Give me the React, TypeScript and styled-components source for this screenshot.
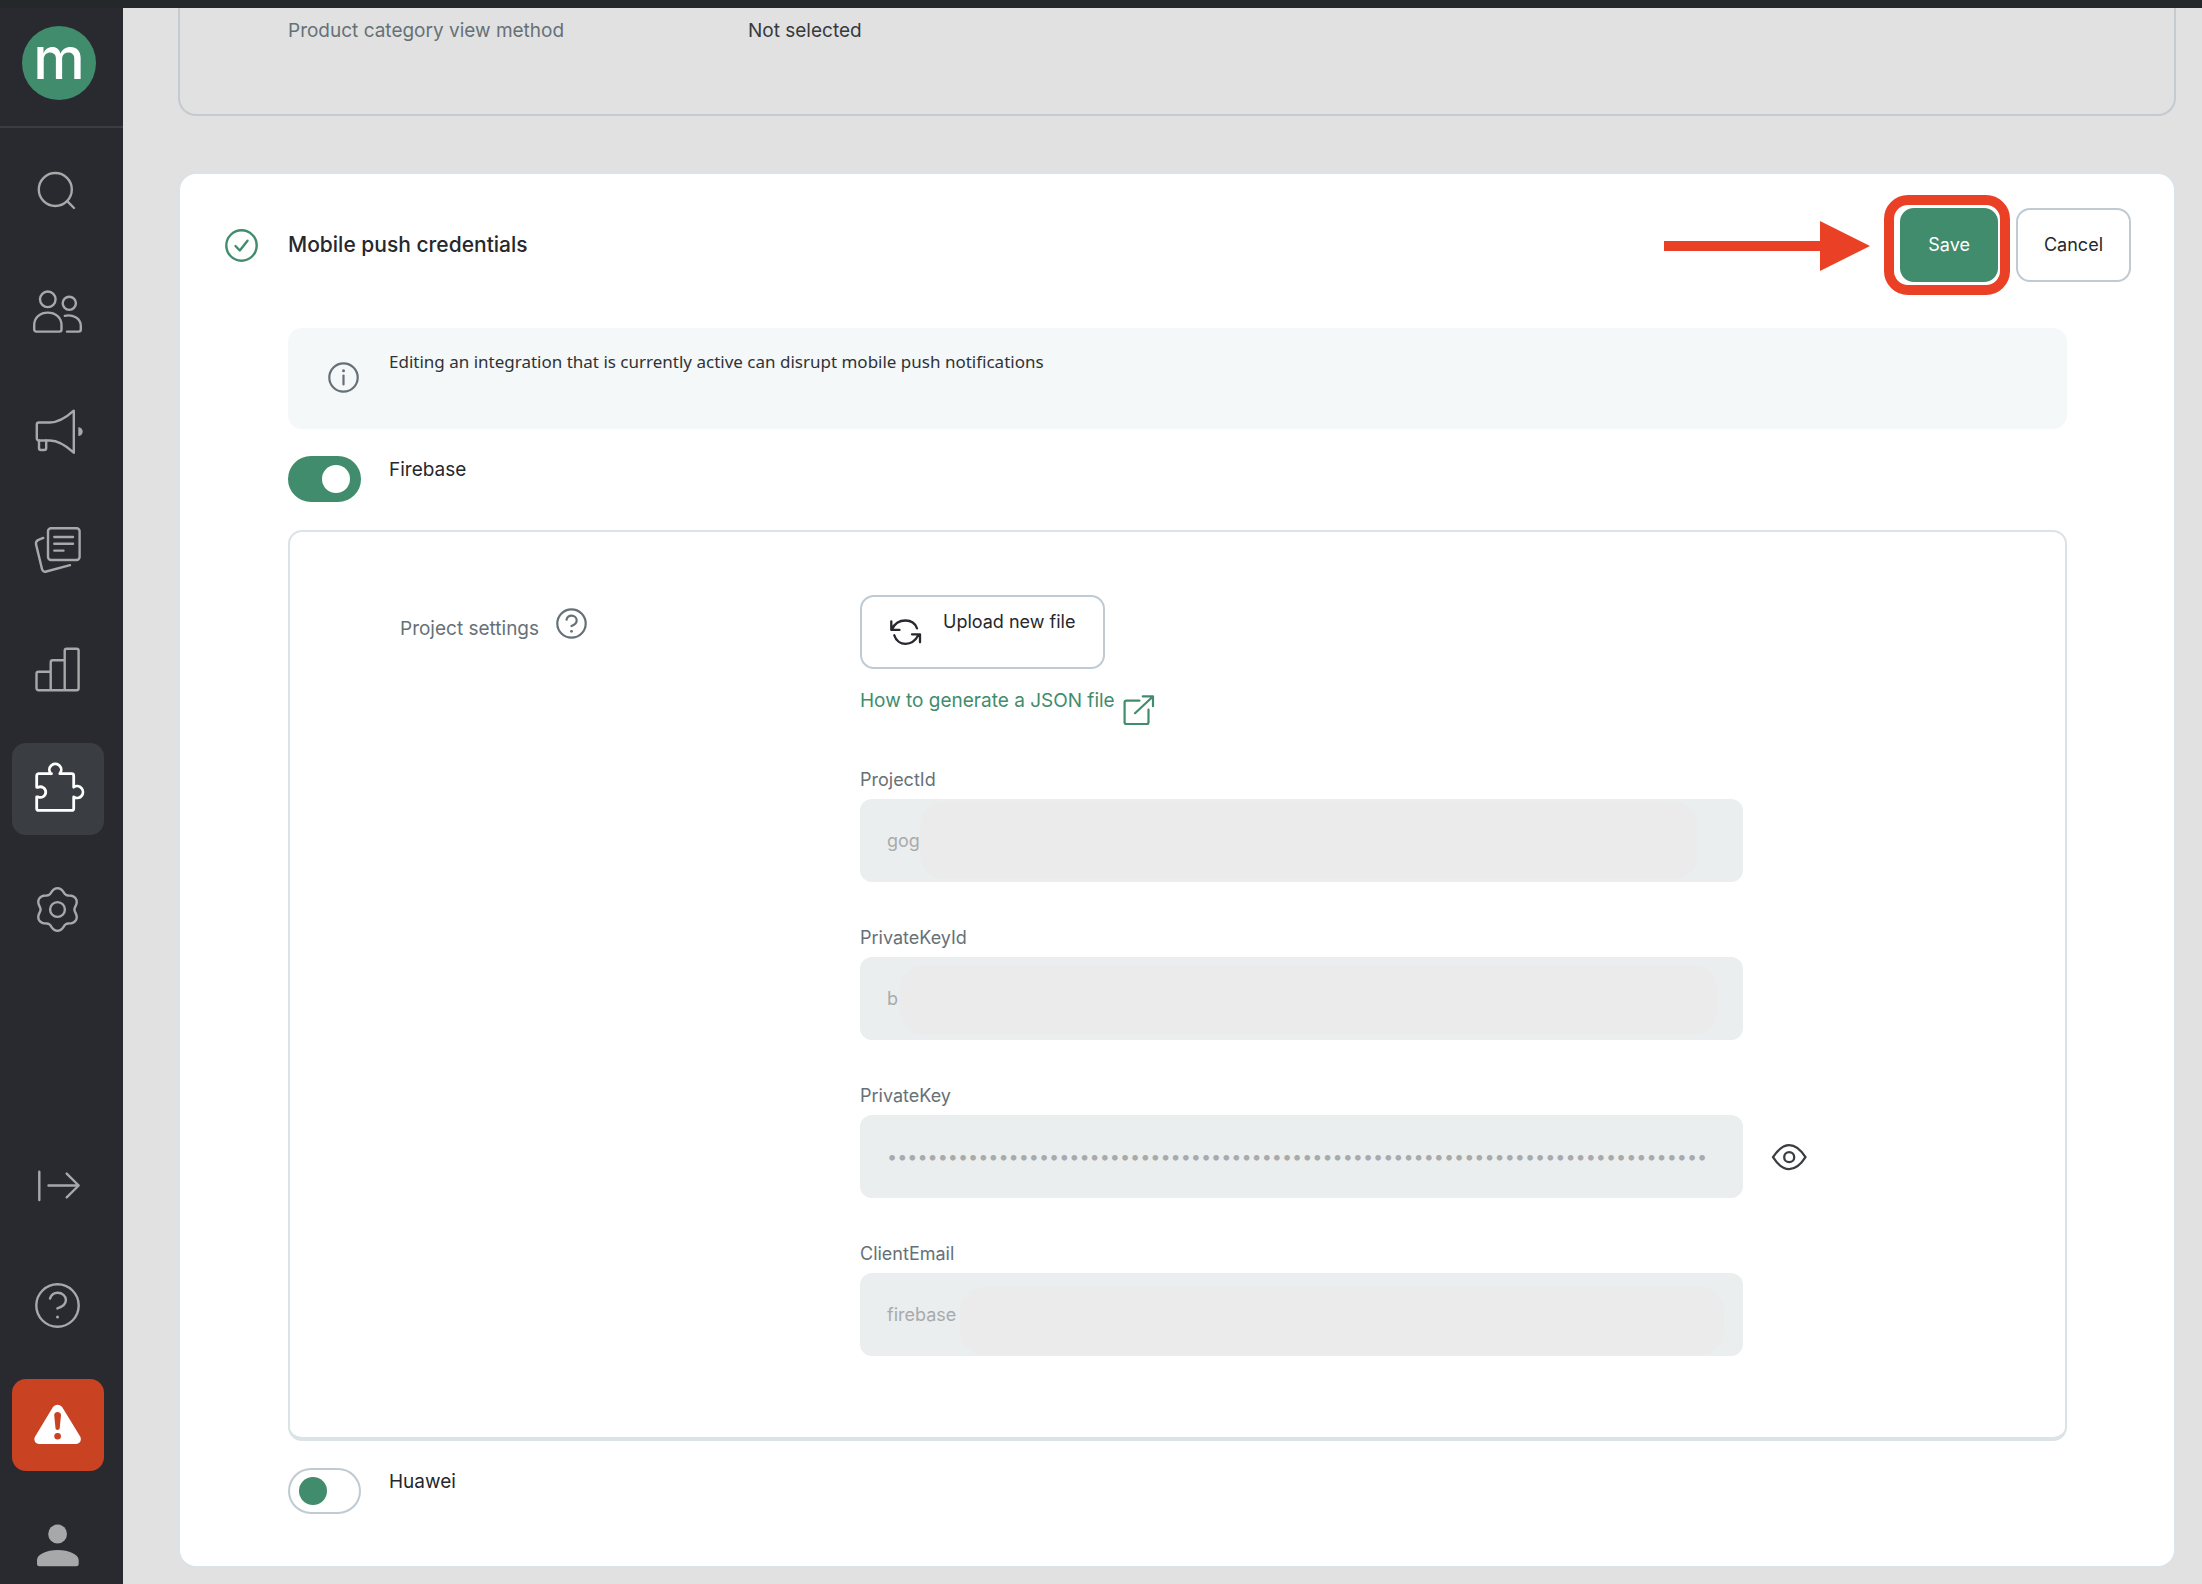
import React, { useState } from "react";
import styled, { createGlobalStyle, css } from "styled-components";

const color = {
  green: "#418c6d",
  ink: "#26282d",
  muted: "#667177",
  line: "#bfcad3",
  softLine: "#dbe3e6",
  page: "#e1e1e1",
  rail: "#292a2f",
  railIcon: "#a7a8aa",
  field: "#eaeeef",
  mask: "#ebebeb",
  mark: "#ea4025",
};

const text = {
  note: "17px",
  label: "18px",
  body: "19px",
  title: "21px",
};

const GlobalStyle = createGlobalStyle`
  *, *::before, *::after { box-sizing: border-box; }
  body {
    margin: 0;
    background: ${color.page};
    color: ${color.ink};
    font-family: Inter, "Liberation Sans", sans-serif;
    font-size: ${text.label};
    line-height: 28px;
  }
  button, input { font: inherit; }
  svg { display: block; flex: none; }
`;

const Page = styled.div`
  display: flex;
  flex-direction: column;
  min-height: 100vh;
`;

const TopStrip = styled.div`
  height: 8px;
  background: #24282b;
`;

const Shell = styled.div`
  display: flex;
  flex: 1;
`;

/* Navigation rail */

const Rail = styled.nav`
  display: flex;
  flex-direction: column;
  flex: none;
  width: 123px;
  overflow: hidden;
  background: ${color.rail};
`;

const RailTop = styled.div`
  display: flex;
  justify-content: center;
  padding: 18px 5px 26px 0;
  border-bottom: 2px solid #3c3d42;
`;

const Logo = styled.a`
  display: flex;
  align-items: center;
  justify-content: center;
  width: 74px;
  height: 74px;
  padding-bottom: 10px;
  border-radius: 50%;
  background: ${color.green};
  color: #fff;
  font-size: 58px;
  font-weight: 500;
  line-height: 60px;
  text-decoration: none;
`;

const RailGroup = styled.div<{ $end?: boolean }>`
  display: flex;
  flex-direction: column;
  gap: 28px;
  padding: 15px 0 0 12px;
  ${(p) =>
    p.$end &&
    css`
      margin-top: auto;
      margin-bottom: -7px;
    `}
`;

const RailButton = styled.button<{ $tone?: "active" | "alert" }>`
  display: flex;
  align-items: center;
  justify-content: center;
  width: 92px;
  height: 92px;
  padding: 0;
  border: 0;
  border-radius: 14px;
  cursor: pointer;
  color: ${(p) => (p.$tone ? "#fff" : color.railIcon)};
  background: ${(p) =>
    p.$tone === "active" ? "#3a3d41" : p.$tone === "alert" ? "#c94222" : "transparent"};
`;

/* Content */

const Main = styled.main`
  flex: 1;
  min-width: 0;
  display: flex;
  flex-direction: column;
  gap: 56px;
  padding: 0 26px 16px 55px;
`;

const SummaryCard = styled.section`
  padding: 9px 108px 69px;
  border: 2px solid #c4cacf;
  border-top: 0;
  border-radius: 0 0 18px 18px;
`;

const SummaryRow = styled.dl`
  display: grid;
  grid-template-columns: 460px 1fr;
  margin: 0;
  font-size: ${text.body};
  dt { color: ${color.muted}; }
  dd { margin: 0; color: #38393c; }
`;

const Card = styled.section`
  padding: 34px 0 52px;
  border: 2px solid ${color.softLine};
  border-radius: 18px;
  background: #fff;
`;

const CardHeader = styled.header`
  display: flex;
  align-items: center;
  gap: 30px;
  padding: 0 43px 0 45px;
`;

const StatusMark = styled.span`
  color: ${color.green};
`;

const CardTitle = styled.h2`
  flex: 1;
  margin: 0;
  font-size: ${text.title};
  font-weight: 500;
`;

const Actions = styled.div`
  display: flex;
  gap: 18px;
`;

const Button = styled.button<{ $primary?: boolean }>`
  height: 74px;
  padding: 0 26px;
  border: 2px solid ${(p) => (p.$primary ? color.green : color.line)};
  border-radius: 14px;
  background: ${(p) => (p.$primary ? color.green : "#fff")};
  color: ${(p) => (p.$primary ? "#fff" : color.ink)};
  cursor: pointer;
`;

const Callout = styled.div`
  position: relative;
  &::after {
    content: "";
    position: absolute;
    inset: -13px -12px -13px -16px;
    border: 10px solid ${color.mark};
    border-radius: 24px;
    pointer-events: none;
  }
`;

const CalloutArrow = styled.svg`
  position: absolute;
  top: 13px;
  right: calc(100% + 30px);
`;

const CardBody = styled.div`
  padding: 46px 107px 0 108px;
`;

const Notice = styled.div`
  display: flex;
  align-items: center;
  gap: 30px;
  padding: 20px 40px 22px;
  border-radius: 14px;
  background: #f4f8f9;
  svg { color: ${color.muted}; }
`;

const NoticeText = styled.p`
  margin: 0 0 31px;
  font-family: "Noto Sans", sans-serif;
  font-size: ${text.note};
  color: #2f3236;
`;

const ToggleRow = styled.label`
  display: flex;
  align-items: flex-start;
  gap: 28px;
  margin-top: 27px;
  font-size: ${text.body};
  cursor: pointer;
`;

const Toggle = styled.input`
  appearance: none;
  flex: none;
  display: flex;
  align-items: center;
  width: 73px;
  height: 46px;
  margin: 0;
  padding: 0 9px;
  border: 2px solid ${color.line};
  border-radius: 23px;
  background: #fff;
  cursor: pointer;
  &::before {
    content: "";
    width: 28px;
    height: 28px;
    border-radius: 50%;
    background: ${color.green};
  }
  &:checked {
    justify-content: flex-end;
    border-color: ${color.green};
    background: ${color.green};
  }
  &:checked::before { background: #fff; }
`;

const Settings = styled.div`
  display: grid;
  grid-template-columns: 460px minmax(0, 1fr);
  margin-top: 28px;
  padding: 63px 110px 81px;
  border: 2px solid ${color.softLine};
  border-bottom-width: 4px;
  border-radius: 14px;
`;

const SettingsLabel = styled.div`
  display: flex;
  align-items: center;
  align-self: start;
  gap: 17px;
  padding-top: 13px;
  color: ${color.muted};
  font-size: ${text.body};
`;

const IconButton = styled.button`
  padding: 0;
  border: 0;
  background: none;
  color: inherit;
  cursor: pointer;
`;

const HelpButton = styled(IconButton)`
  padding-bottom: 10px;
`;

const Stack = styled.div`
  display: flex;
  flex-direction: column;
  gap: 42px;
`;

const FileSource = styled.div`
  display: flex;
  flex-direction: column;
  align-items: flex-start;
  gap: 18px;
`;

const UploadButton = styled(Button)`
  display: flex;
  align-items: center;
  gap: 22px;
  padding: 0 28px;
  span {
    align-self: flex-start;
    padding-top: 11px;
  }
`;

const DocLink = styled.a`
  display: flex;
  gap: 8px;
  height: 37px;
  color: ${color.green};
  font-size: ${text.body};
  text-decoration: none;
  svg { align-self: flex-end; }
`;

const Field = styled.div`
  display: flex;
  flex-direction: column;
  gap: 5px;
`;

const FieldLabel = styled.label`
  color: ${color.muted};
`;

const FieldRow = styled.div`
  display: flex;
  align-items: center;
  gap: 28px;
  color: #3a3d41;
`;

const InputBox = styled.div`
  position: relative;
  flex: 0 1 883px;
`;

const Input = styled.input`
  display: block;
  width: 100%;
  height: 83px;
  padding: 0 27px;
  border: 0;
  border-radius: 12px;
  background: ${color.field};
  color: #a9aaab;
`;

const Mask = styled.span<{ $inset: string }>`
  position: absolute;
  inset: ${(p) => p.$inset};
  border-radius: 24px;
  background: ${color.mask};
`;

/* Icons */

type IconProps = { size?: number; width?: number; children: React.ReactNode };

const Icon = ({ size = 52, width = 2.4, children }: IconProps) => (
  <svg
    width={size}
    height={size}
    viewBox={`0 0 ${size} ${size}`}
    fill="none"
    stroke="currentColor"
    strokeWidth={width}
    strokeLinecap="round"
    strokeLinejoin="round"
    overflow="visible"
    aria-hidden="true"
  >
    {children}
  </svg>
);

const SearchIcon = () => (
  <Icon>
    <circle cx="23.3" cy="26.5" r="16.5" />
    <path d="M35.2 38.2 42 45" />
  </Icon>
);

const PeopleIcon = () => (
  <Icon>
    <circle cx="15.8" cy="16.3" r="7.8" />
    <path d="M4.2 48.6h23.3a2 2 0 0 0 2-2V42C29.5 34 23 29.6 15.8 29.6S2.2 34 2.2 42v4.6a2 2 0 0 0 2 2z" />
    <circle cx="37.3" cy="20.3" r="6.6" />
    <path d="M32.8 32.8C40.5 31.2 48.8 35 48.8 43v3.6a2 2 0 0 1-2 2H35" />
  </Icon>
);

const MegaphoneIcon = () => (
  <Icon>
    <path d="M6.8 19.5H18c9 0 17-5.7 23.8-11.8v42C35 43.5 27 37.5 18 37.5H6.8a2 2 0 0 1-2-2v-14a2 2 0 0 1 2-2z" />
    <path d="M7 37.5V45a2 2 0 0 0 2 2h3.2a2 2 0 0 0 2-2v-7.5" />
    <path d="M46.3 24.2a4.4 4.4 0 0 1 0 8.8z" fill="currentColor" stroke="none" />
  </Icon>
);

const CardsIcon = () => (
  <Icon>
    <rect x="16" y="5.2" width="31.6" height="31.8" rx="3" />
    <path d="M22.3 14H41M22.3 20.8H41M22.3 27.6h9.2" />
    <path d="M11.3 14.9 7 16.6c-2.6 1-3.5 2.5-2.9 5L10 46c.5 2.2 2 3.1 4.3 2.5L38 42.2" />
  </Icon>
);

const BarsIcon = () => (
  <Icon>
    <path d="M18.7 47.3H6.5a2 2 0 0 1-2-2V30.8a2 2 0 0 1 2-2h12.2M32.7 47.3h-14v-28a2 2 0 0 1 2-2h12M32.7 47.3V7.8a2 2 0 0 1 2-2h9.9a2 2 0 0 1 2 2v37.5a2 2 0 0 1-2 2z" />
  </Icon>
);

const PuzzleIcon = () => (
  <Icon width={2.8}>
    <path d="M19.5 10.7H6.7a2 2 0 0 0-2 2v11.6h1.5a5.3 5.3 0 1 1 0 9.6H4.7v11.5a2 2 0 0 0 2 2h33a2 2 0 0 0 2-2V33.9a5.9 5.9 0 1 0 0-9.7V12.7a2 2 0 0 0-2-2H27.8a5.9 5.9 0 1 0-9 0" />
  </Icon>
);

/* Six-lobed outline sampled around the hub. */
const gearOutline =
  Array.from({ length: 96 }, (_, i) => {
    const a = (i / 96) * Math.PI * 2;
    const wave = Math.cos(6 * (a - Math.PI / 2));
    const r = 19.4 + 2.2 * wave - 0.3 * wave * wave;
    return `${i ? "L" : "M"}${(25.5 + r * Math.cos(a)).toFixed(2)} ${(26.5 + r * Math.sin(a)).toFixed(2)}`;
  }).join("") + "Z";

const GearIcon = () => (
  <Icon>
    <path d={gearOutline} />
    <circle cx="25.5" cy="26.5" r="7.4" />
  </Icon>
);

const ExpandIcon = () => (
  <Icon>
    <path d="M7.3 12.8V41M16.5 26.5h30M34.7 14.6l12 11.9-12 11.9" />
  </Icon>
);

const RailHelpIcon = () => (
  <Icon>
    <circle cx="25.5" cy="26.5" r="21.2" />
    <path d="M18 19.5c1.2-3.6 4-5.7 7.6-5.7 4.6 0 8.3 3 8.3 7.2 0 4.4-3.6 6.8-8.5 8.4" />
    <circle cx="25.5" cy="38" r="1.5" fill="currentColor" stroke="none" />
  </Icon>
);

const AlertIcon = () => (
  <Icon>
    <path
      d="M20.8 8.3c2.2-3.5 7.3-3.5 9.5 0L48 37.3c2.2 3.5 0 7.7-4 7.7H7.3c-4 0-6.3-4.2-4-7.7z"
      fill="currentColor"
      stroke="none"
    />
    <path d="M22.2 16c0-4 6.8-4 6.8 0l-1.3 13.3c-.2 2.3-4 2.3-4.2 0z" fill="#c94222" stroke="none" />
    <circle cx="25.6" cy="37.3" r="3.3" fill="#c94222" stroke="none" />
  </Icon>
);

const UserIcon = () => (
  <Icon>
    <g fill="currentColor" stroke="none">
      <circle cx="25.6" cy="15" r="9.4" />
      <path d="M5 41c0-5.5 9.5-10 20.7-10s21 4.5 21 10v3.7a2.5 2.5 0 0 1-2.5 2.5H7.5A2.5 2.5 0 0 1 5 44.7z" />
    </g>
  </Icon>
);

const CheckIcon = () => (
  <Icon size={33}>
    <circle cx="16.5" cy="16.5" r="15.2" />
    <path d="m10.5 17 4.3 4.5 7.7-9.8" />
  </Icon>
);

const InfoIcon = () => (
  <Icon size={31} width={2.2}>
    <circle cx="15.5" cy="15.5" r="14.2" />
    <path d="M15.5 13.5v9" />
    <circle cx="15.5" cy="8.8" r="1.5" fill="currentColor" stroke="none" />
  </Icon>
);

const HelpIcon = () => (
  <Icon size={31} width={2.2}>
    <circle cx="15.5" cy="15.5" r="14.2" />
    <path d="M10.5 11.7c.7-2.6 2.500-4.100 5-4.100 2.900 0 5.200 2.100 5.200 4.800 0 2.900-2.300 4.400-5.200 5.600" />
    <circle cx="15.5" cy="23.3" r="1.4" fill="currentColor" stroke="none" />
  </Icon>
);

const RefreshIcon = () => (
  <Icon size={31} width={2.3}>
    <path d="M1.3 4.4v8.5h8.2M1.8 12.5C4.5 6.5 9.5 3.5 15.5 3.5c5.5 0 9.8 3 11.5 7.8" />
    <path d="M4.3 18.3c1.7 5.2 6.2 8.5 11.2 8.5 5.5 0 10-3.3 13-8.8M22 17.3h8v8" />
  </Icon>
);

const ExternalIcon = () => (
  <Icon size={32} width={2.2}>
    <path d="M16.5 8.6H3.4a1.8 1.8 0 0 0-1.8 1.8v19.8A1.8 1.8 0 0 0 3.4 32h20.3a1.8 1.8 0 0 0 1.8-1.8V17.5" />
    <path d="M12 21.2 29.7 4.7M19.8 4.4H30v9.8" />
  </Icon>
);

const EyeIcon = () => (
  <Icon size={36} width={2.3}>
    <path d="M2 18.2C6 12 11 6.2 18.2 6.2S30.5 12 34.5 18.2c-4 6.2-9 12-16.3 12S6 24.4 2 18.2z" />
    <circle cx="18.2" cy="18.2" r="5" />
  </Icon>
);

const mainNav = [
  { name: "Search", Glyph: SearchIcon },
  { name: "Customers", Glyph: PeopleIcon },
  { name: "Campaigns", Glyph: MegaphoneIcon },
  { name: "Content", Glyph: CardsIcon },
  { name: "Reports", Glyph: BarsIcon },
  { name: "Integrations", Glyph: PuzzleIcon, tone: "active" as const },
  { name: "Settings", Glyph: GearIcon },
];

const footNav = [
  { name: "Expand", Glyph: ExpandIcon },
  { name: "Help", Glyph: RailHelpIcon },
  { name: "Alerts", Glyph: AlertIcon, tone: "alert" as const },
  { name: "Account", Glyph: UserIcon },
];

const fields = [
  { id: "ProjectId", value: "gog", mask: "3px 45px 3px 60px" },
  { id: "PrivateKeyId", value: "b", mask: "8px 26px 5px 40px" },
  { id: "PrivateKey", value: "0".repeat(81), secret: true },
  { id: "ClientEmail", value: "firebase", mask: "14px 19px 1px 100px" },
];

export default function App() {
  const [firebase, setFirebase] = useState(true);
  const [huawei, setHuawei] = useState(false);
  const [revealed, setRevealed] = useState(false);

  return (
    <Page>
      <GlobalStyle />
      <TopStrip />
      <Shell>
        <Rail>
          <RailTop>
            <Logo href="#">m</Logo>
          </RailTop>
          <RailGroup>
            {mainNav.map(({ name, Glyph, tone }) => (
              <RailButton key={name} type="button" aria-label={name} $tone={tone}>
                <Glyph />
              </RailButton>
            ))}
          </RailGroup>
          <RailGroup $end>
            {footNav.map(({ name, Glyph, tone }) => (
              <RailButton key={name} type="button" aria-label={name} $tone={tone}>
                <Glyph />
              </RailButton>
            ))}
          </RailGroup>
        </Rail>

        <Main>
          <SummaryCard>
            <SummaryRow>
              <dt>Product category view method</dt>
              <dd>Not selected</dd>
            </SummaryRow>
          </SummaryCard>

          <Card>
            <CardHeader>
              <StatusMark>
                <CheckIcon />
              </StatusMark>
              <CardTitle>Mobile push credentials</CardTitle>
              <Actions>
                <Callout>
                  <CalloutArrow width="206" height="50" viewBox="0 0 206 50" aria-hidden="true">
                    <path d="M0 20h156V0l50 25-50 25V30H0z" fill={color.mark} />
                  </CalloutArrow>
                  <Button type="button" $primary>
                    Save
                  </Button>
                </Callout>
                <Button type="button">Cancel</Button>
              </Actions>
            </CardHeader>

            <CardBody>
              <Notice>
                <InfoIcon />
                <NoticeText>
                  Editing an integration that is currently active can disrupt mobile push notifications
                </NoticeText>
              </Notice>

              <ToggleRow>
                <Toggle type="checkbox" checked={firebase} onChange={() => setFirebase(!firebase)} />
                Firebase
              </ToggleRow>

              <Settings>
                <SettingsLabel>
                  Project settings
                  <HelpButton type="button" aria-label="About project settings">
                    <HelpIcon />
                  </HelpButton>
                </SettingsLabel>
                <Stack>
                  <FileSource>
                    <UploadButton type="button">
                      <RefreshIcon />
                      <span>Upload new file</span>
                    </UploadButton>
                    <DocLink href="#">
                      How to generate a JSON file
                      <ExternalIcon />
                    </DocLink>
                  </FileSource>
                  {fields.map(({ id, value, mask, secret }) => (
                    <Field key={id}>
                      <FieldLabel htmlFor={id}>{id}</FieldLabel>
                      <FieldRow>
                        <InputBox>
                          <Input
                            id={id}
                            type={secret && !revealed ? "password" : "text"}
                            value={value}
                            readOnly
                          />
                          {mask && <Mask $inset={mask} />}
                        </InputBox>
                        {secret && (
                          <IconButton
                            type="button"
                            aria-label="Show private key"
                            onClick={() => setRevealed(!revealed)}
                          >
                            <EyeIcon />
                          </IconButton>
                        )}
                      </FieldRow>
                    </Field>
                  ))}
                </Stack>
              </Settings>

              <ToggleRow>
                <Toggle type="checkbox" checked={huawei} onChange={() => setHuawei(!huawei)} />
                Huawei
              </ToggleRow>
            </CardBody>
          </Card>
        </Main>
      </Shell>
    </Page>
  );
}
